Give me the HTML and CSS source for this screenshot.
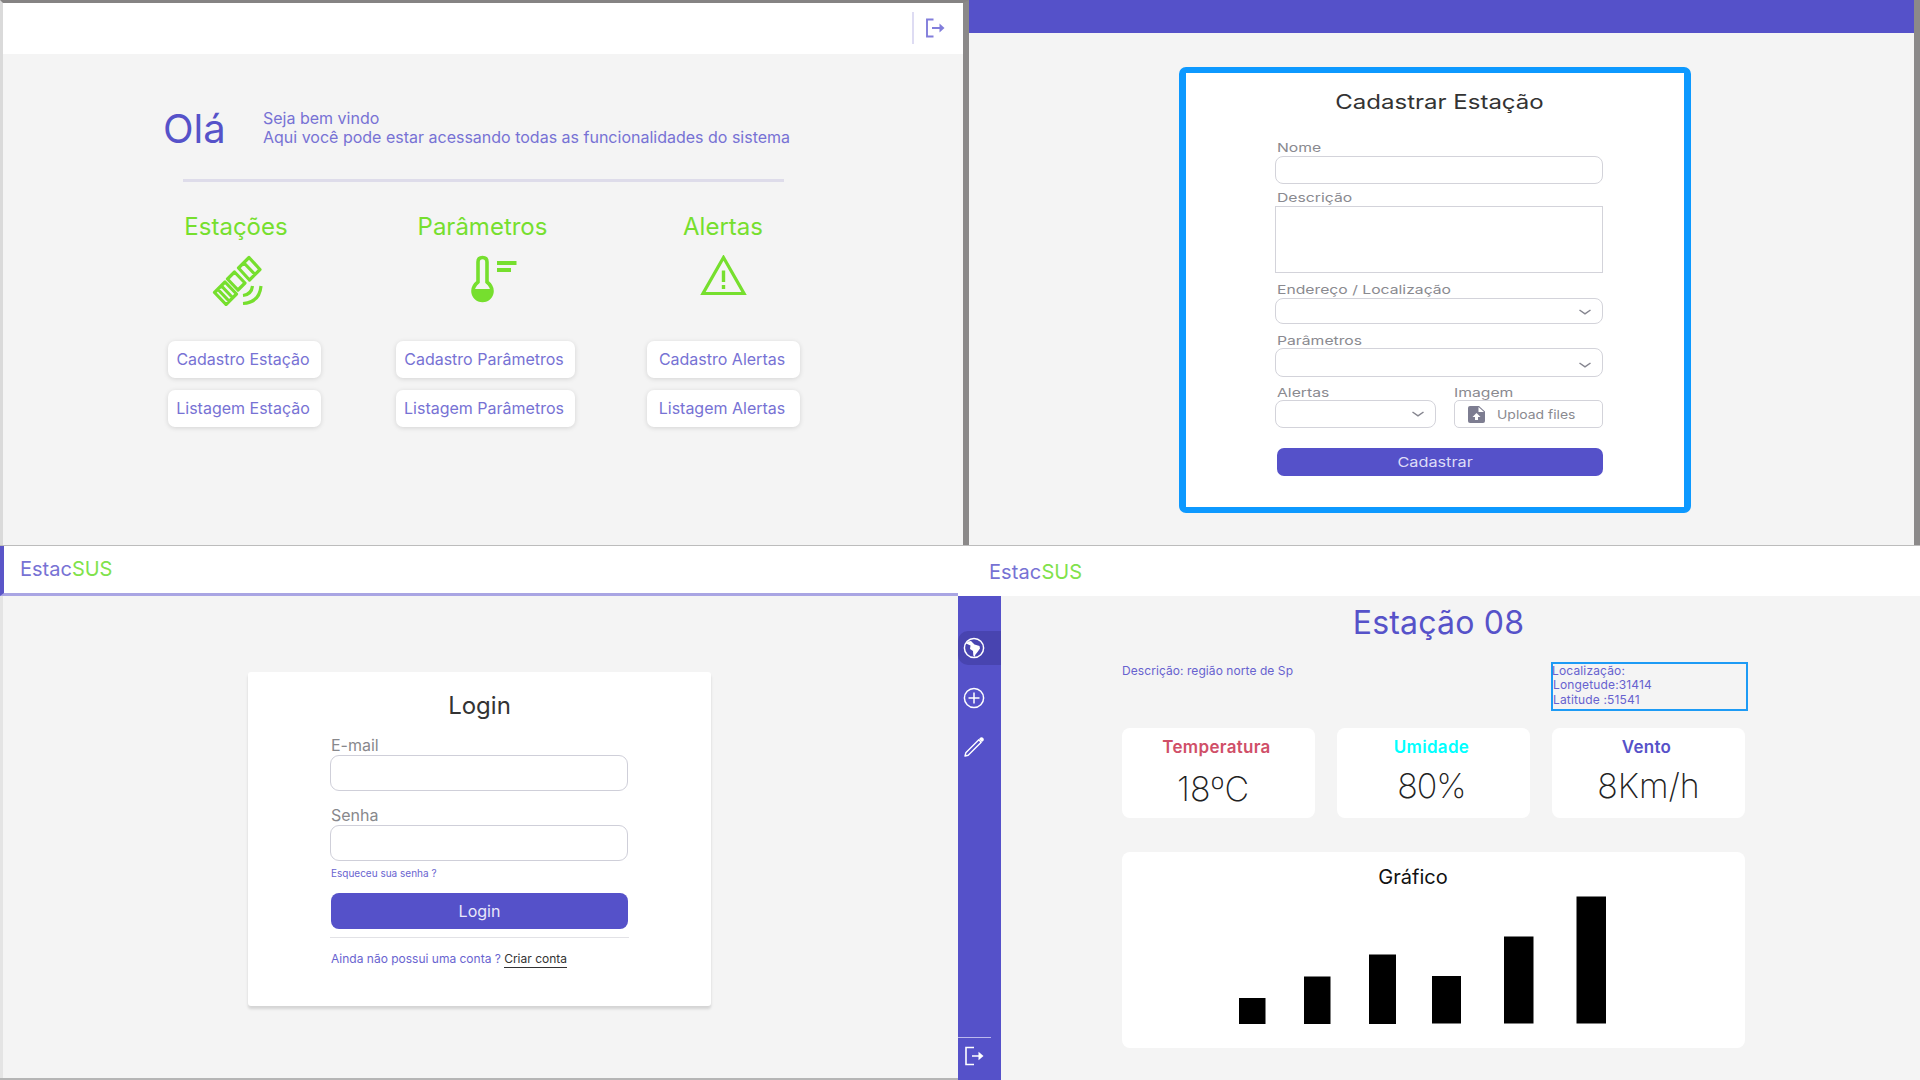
FILE: index.html
```html
<!DOCTYPE html>
<html lang="pt-BR">
<head>
<meta charset="utf-8">
<title>EstacSUS</title>
<link rel="stylesheet" href="styles.css">
</head>
<body>
<div class="row row-top">
  <section class="screen home">
    <header class="home-bar">
      <span class="bar-sep"></span>
      <svg class="exit" viewBox="0 0 20 20"><path d="M8.500 1.500H2V18.500H8.500M7 10H16" fill="none" stroke="currentColor" stroke-width="1.900"/><path d="M14.500 5.500L19.500 10L14.500 14.500Z" fill="currentColor"/></svg>
    </header>
    <main class="home-body">
      <div class="hello">
        <h1>Olá</h1>
        <p>Seja bem vindo<br>Aqui você pode estar acessando todas as funcionalidades do sistema</p>
      </div>
      <div class="rule"></div>
      <div class="groups">
        <div class="group g1">
          <h2>Estações</h2>
          <svg class="g-icon" viewBox="0 0 51 51"><g fill="none" stroke="currentColor" stroke-width="3.200" stroke-linejoin="round"><path d="M37 2.500L48 14.500L37.500 25L26.500 13ZM32 8L43 19.500M22.500 17L33 28L26 35L15.500 24ZM13 27L24.500 39L14 49.500L2.500 37.500ZM9.500 31L20.500 42.500M6 34.500L17 46"/><path d="M31 40.500Q39.500 39.500 40.500 31M31 48.500Q47.500 47.500 49 31"/></g></svg>
          <a class="btn">Cadastro Estação</a>
          <a class="btn">Listagem Estação</a>
        </div>
        <div class="group g2">
          <h2>Parâmetros</h2>
          <svg class="g-icon" viewBox="0 0 51 51"><path d="M12 27V7Q12 2.500 16.500 2.500T21 7V27Q26 31 26 36A9.500 9.500 0 0 1 7 36Q7 31 12 27Z" fill="none" stroke="currentColor" stroke-width="3.600"/><path d="M7 34H26V37A9.500 9.500 0 0 1 7 37Z" fill="currentColor"/><path d="M31 8H50.500M31 15H45" stroke="currentColor" stroke-width="4"/></svg>
          <a class="btn">Cadastro Parâmetros</a>
          <a class="btn">Listagem Parâmetros</a>
        </div>
        <div class="group g3">
          <h2>Alertas</h2>
          <svg class="g-icon" viewBox="0 0 51 51"><path d="M25.500 2.500L46 38.500H5Z" fill="none" stroke="currentColor" stroke-width="3.200"/><path d="M25.500 15.500V27M25.500 30V34" stroke="currentColor" stroke-width="3.400"/></svg>
          <a class="btn">Cadastro Alertas</a>
          <a class="btn">Listagem Alertas</a>
        </div>
      </div>
    </main>
  </section>
  <section class="screen register">
    <div class="register-bar"></div>
    <form class="station-form">
      <h2>Cadastrar Estação</h2>
      <label class="f-name">Nome</label>
      <div class="field in-name"></div>
      <label class="f-desc">Descrição</label>
      <div class="field area"></div>
      <label class="f-addr">Endereço / Localização</label>
      <div class="field sel-addr"><svg class="chev" viewBox="0 0 12 6"><path d="M.5 1L6 4.800L11.500 1" fill="none" stroke="currentColor" stroke-width="1.500"/></svg></div>
      <label class="f-par">Parâmetros</label>
      <div class="field sel-par"><svg class="chev" viewBox="0 0 12 6"><path d="M.5 1L6 4.800L11.500 1" fill="none" stroke="currentColor" stroke-width="1.500"/></svg></div>
      <div class="pair">
        <div class="half-a">
          <label>Alertas</label>
          <div class="field"><svg class="chev" viewBox="0 0 12 6"><path d="M.5 1L6 4.800L11.500 1" fill="none" stroke="currentColor" stroke-width="1.500"/></svg></div>
        </div>
        <div class="half-b">
          <label>Imagem</label>
          <div class="field upload"><svg class="file" viewBox="0 0 17 17"><path d="M2 0H11L17 5.500V15Q17 17 15 17H2Q0 17 0 15V2Q0 0 2 0Z" fill="currentColor"/><path d="M10.500 1V6H16M8.500 7L12.500 11H10V14H7V11H4.500Z" fill="#fff"/></svg><span>Upload files</span></div>
        </div>
      </div>
      <div class="submit"><span>Cadastrar</span></div>
    </form>
  </section>
</div>
<div class="row row-bottom">
  <section class="screen signin">
    <header class="signin-bar"><div class="logo"><span>Estac</span><span class="sus">SUS</span></div></header>
    <div class="signin-body">
      <form class="login-card">
        <h2>Login</h2>
        <label class="l-mail">E-mail</label>
        <div class="input"></div>
        <label class="l-pass">Senha</label>
        <div class="input"></div>
        <a class="forgot">Esqueceu sua senha ?</a>
        <div class="login-btn">Login</div>
        <div class="line"></div>
        <p class="signup"><span>Ainda não possui uma conta ?</span><a>Criar conta</a></p>
      </form>
    </div>
  </section>
  <section class="screen station">
    <header class="station-bar"><div class="logo"><span>Estac</span><span class="sus">SUS</span></div></header>
    <div class="station-main">
      <nav class="side">
        <div class="side-item active"><svg viewBox="0 0 22 22"><circle cx="11" cy="11" r="9.600" fill="none" stroke="#fff" stroke-width="1.500"/><path d="M3 6.500L5 4.500L8 4L11.500 7.500L16.500 9L17 11.500L14.500 15L12.500 17.500L11.500 20L10.300 18.500L10 14L7 12L7.500 8.500Z" fill="#fff"/></svg></div>
        <div class="side-item"><svg viewBox="0 0 22 22"><path d="M11 5.500V16.500M5.500 11H16.500" stroke="#fff" stroke-width="1.500"/><circle cx="11" cy="11" r="9.600" fill="none" stroke="#fff" stroke-width="1.500"/></svg></div>
        <div class="side-item"><svg viewBox="0 0 22 22"><path d="M2 20L2.800 16.800L15.800 3.800L18.200 6.200L5.200 19.200Z" fill="none" stroke="#fff" stroke-width="1.400" stroke-linejoin="round"/><path d="M16 3L17.500 1.500Q19 .8 20.200 2T20.500 4.500L19 6Z" fill="#fff"/></svg></div>
        <div class="side-end"><svg class="exit" viewBox="0 0 20 20"><path d="M10 1.500H2V18.500H10M8 10H16" fill="none" stroke="currentColor" stroke-width="1.600"/><path d="M14.500 5.800L19.500 10L14.500 14.200Z" fill="currentColor"/></svg></div>
      </nav>
      <main class="board">
        <h1>Estação 08</h1>
        <div class="info">
          <p class="desc">Descrição: região norte de Sp</p>
          <p class="loc">Localização:<br>Longetude:31414<br>Latitude :51541</p>
        </div>
        <div class="cards">
          <div class="card temp"><h3>Temperatura</h3><div class="val">18ºC</div></div>
          <div class="card hum"><h3>Umidade</h3><div class="val">80%</div></div>
          <div class="card wind"><h3>Vento</h3><div class="val">8Km/h</div></div>
        </div>
        <div class="chart">
          <h4>Gráfico</h4>
          <svg class="bars" viewBox="0 0 367 128"><path d="M0 102H26.500V128H0ZM65 80.500H91.500V128H65ZM130 58.500H157V128H130ZM193 80H222V127.500H193ZM265 40.500H294.500V127.500H265ZM337.500.5H367V127.500H337.500Z"/></svg>
        </div>
      </main>
    </div>
  </section>
</div>
</body>
</html>
```
FILE: styles.css
```css
* { box-sizing: border-box; }
body { margin: 0; width: 1920px; height: 1080px; overflow: hidden; background: #f4f4f4; font-family: Inter, "Liberation Sans", sans-serif; color: #5652c9; }
h1, h2, h3, h4, p { margin: 0; font-weight: 400; white-space: nowrap; }
svg { display: block; flex: none; }

.row { display: flex; }
.row-top { height: 545px; }
.row-bottom { height: 535px; border-top: 1px solid #bcbcbc; }
.screen { background: #f4f4f4; overflow: hidden; }

/* Home */
.home { width: 969px; border-top: 3px solid #858383; border-right: 6px solid #8b8989; border-left: 3px solid #dadada; }
.home-bar { display: flex; justify-content: flex-end; align-items: flex-start; height: 51px; padding: 9px 18px 0 0; background: #fff; }
.bar-sep { width: 2px; height: 32px; margin-right: 11px; background: #dedcf3; }
.home-bar .exit { width: 20px; height: 20px; margin-top: 6px; color: #817ddb; }
.hello { display: flex; padding: 54px 0 0 160px; height: 125px; }
.hello h1 { width: 100px; font-size: 40px; line-height: 42px; }
.hello p { font-size: 16px; line-height: 19px; padding-top: 1px; color: #7772d4; }
.rule { width: 601px; height: 3px; margin-left: 180px; background: #dedcea; }
.groups { display: flex; padding: 33px 0 0 165px; }
.group { display: flex; flex-direction: column; align-items: center; }
.g1 { width: 153px; margin-right: 75px; }
.g2 { width: 179px; margin-right: 72px; }
.g3 { width: 153px; }
.group h2 { font-size: 24px; line-height: 24px; color: #76df2e; }
.g1 h2 { margin-left: -17px; }
.g2 h2 { margin-left: -6px; }
.g3 h2 { margin-left: -1px; }
.g-icon { width: 51px; height: 51px; margin-top: 16px; color: #76df2e; }
.g1 .g-icon { margin-left: -14px; }
.g2 .g-icon { margin-left: 11px; }
.btn { width: 100%; height: 37px; padding-right: 3px; border-radius: 7px; background: #fff; box-shadow: 0 1px 5px #0002; font-size: 16px; line-height: 37px; text-align: center; white-space: nowrap; color: #7772d4; }
.g-icon + .btn { margin: 35px 0 12px; }

/* Station form */
.register { width: 951px; border-right: 6px solid #8b8989; }
.register-bar { height: 33px; background: #5551c9; }
.station-form { width: 512px; height: 446px; margin: 34px 0 0 210px; padding: 17px 80px 0 89px; border: 6px solid #0d99ff; border-left-width: 7px; border-right-width: 7px; border-radius: 7px; background: #fff; color: #8a8a90; }
.station-form h2 { line-height: 24px; font-size: 20px; text-align: center; color: #333; transform: scaleX(1.2); }
.station-form label { display: block; width: max-content; line-height: 12px; font-size: 12px; margin-left: 2px; white-space: nowrap; transform: scaleX(1.31); transform-origin: left; }
.field { border: 1px solid #d3d3da; border-radius: 8px; width: 328px; }
.station-form .f-name { margin-top: 28px; }
.in-name { height: 28px; margin-top: 2px; }
.station-form .f-desc { margin-top: 8px; }
.area { height: 67px; margin-top: 2px; border-radius: 0; }
.station-form .f-addr { margin-top: 11px; }
.sel-addr { height: 26px; margin-top: 2px; }
.station-form .f-par { margin-top: 11px; }
.sel-par { height: 29px; margin-top: 1px; }
.chev { width: 12px; height: 6px; margin: 10px 11px 0 auto; color: #85858f; }
.sel-par .chev { margin-top: 13px; }
.pair { display: flex; justify-content: space-between; margin-top: 10px; width: 328px; }
.half-a { width: 161px; }
.half-b { width: 149px; }
.station-form .half-b label { margin-left: 0; }
.pair .field { width: 100%; height: 28px; margin-top: 1px; }
.upload { display: flex; align-items: center; padding-left: 13px; font-size: 12px; white-space: nowrap; }
.upload span { transform: scaleX(1.16); transform-origin: left; }
.pair .upload { border-radius: 5px; }
.file { width: 17px; height: 17px; margin-right: 12px; color: #7d7d91; }
.submit { width: 326px; height: 28px; margin: 20px 0 0 2px; padding-right: 10px; border-radius: 7px; background: #5551c9; color: #dddcf7; font-size: 13px; line-height: 28px; text-align: center; }
.submit span { display: inline-block; transform: scaleX(1.25); }

/* Sign in */
.logo { font-size: 20px; line-height: 20px; color: #7772d4; white-space: nowrap; }
.sus { color: #80e24b; }
.signin { width: 958px; border-bottom: 2px solid #b5b5b5; }
.signin-bar { height: 50px; padding: 13px 0 0 16px; border-left: 4px solid #5a55c8; border-bottom: 3px solid #a9a5e3; background: #fff; }
.signin-body { height: 482px; padding: 76px 0 0 245px; border-left: 3px solid #e4e4e4; }
.login-card { width: 463px; height: 334px; padding: 22px 82px 0 82px; border-radius: 3px; background: #fff; box-shadow: 0 3px 3px #0002; color: #88888c; }
.login-card h2 { font-size: 24px; line-height: 24px; text-align: center; color: #333; }
.login-card label { display: block; margin-left: 1px; font-size: 16px; line-height: 16px; }
.login-card .l-mail { margin-top: 19px; }
.login-card .l-pass { margin-top: 16px; }
.input { width: 298px; height: 36px; margin-top: 2px; border: 1px solid #cfcfd9; border-radius: 9px; }
.forgot { display: block; margin: 6px 0 0 1px; font-size: 10px; line-height: 12px; color: #6964d0; }
.login-btn { width: 297px; height: 36px; margin: 14px 0 0 1px; border-radius: 8px; background: #5551c9; color: #e9e8fa; font-size: 16px; line-height: 36px; text-align: center; }
.line { height: 1px; margin-top: 8px; background: #e2e2e6; }
.signup { display: flex; justify-content: space-between; width: 236px; margin: 14px 0 0 1px; font-size: 12px; line-height: 14px; color: #6964d0; }
.signup a { height: 16px; border-bottom: 1px solid #333; color: #333; }

/* Station */
.station { width: 962px; }
.station-bar { height: 50px; padding: 16px 0 0 31px; background: #fff; }
.station-bar .logo { letter-spacing: .1px; }
.station-main { display: flex; height: 484px; }
.side { display: flex; flex-direction: column; width: 43px; padding-top: 35px; background: #5551c9; }
.side-item { display: flex; align-items: center; height: 34px; margin-bottom: 15.500px; padding-left: 5px; }
.side-item svg { width: 22px; height: 22px; }
.active { border-radius: 10px 0 0 10px; background: #4844b0; }
.side-end { width: 33px; height: 43px; margin-top: auto; padding: 8px 0 0 6px; border-top: 1px solid #bbb8ec; color: #fff; }
.side-end .exit { width: 20px; height: 20px; }
.board { width: 623px; margin-left: 121px; padding-top: 11px; }
.board h1 { font-size: 32px; line-height: 32px; text-align: center; padding-left: 10px; letter-spacing: .2px; }
.info { display: flex; justify-content: space-between; margin-top: 23px; font-size: 12px; line-height: 14px; color: #6762cf; letter-spacing: .07px; }
.desc { padding-top: 2px; }
.loc { width: 197px; height: 49px; margin: 0 -3px 0 0; border: 2px solid #1d9bf5; letter-spacing: .15px; line-height: 14.300px; text-indent: -1px; }
.cards { display: flex; justify-content: space-between; margin-top: 17px; }
.card { width: 193px; height: 90px; padding-top: 9px; border-radius: 8px; background: #fff; text-align: center; }
.card h3 { font-size: 17px; line-height: 20px; font-weight: 600; margin-right: 4px; letter-spacing: .3px; }
.val { font-size: 34px; line-height: 34px; margin: 12px 0 0; font-weight: 250; color: #222; }
.temp h3 { color: #d04f68; }
.hum h3 { color: #0ff; }
.temp .val { margin: 15px 11px 0 0; }
.hum .val { margin-right: 4px; letter-spacing: -1px; }
.chart { height: 196px; margin-top: 34px; padding-top: 15px; border-radius: 8px; background: #fff; color: #111; }
.chart h4 { font-size: 20px; line-height: 20px; text-align: center; margin-right: 41px; }
.bars { width: 367px; height: 128px; margin: 9px 0 0 117px; fill: #000; }
```
